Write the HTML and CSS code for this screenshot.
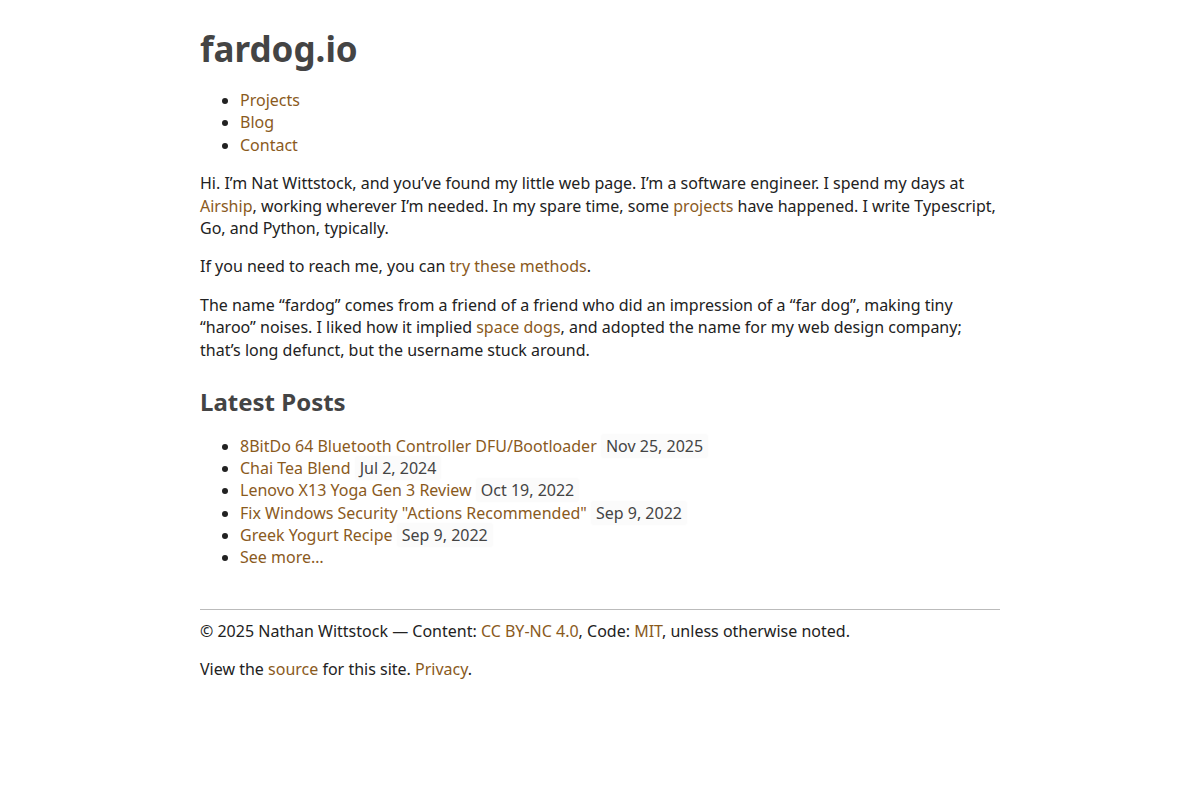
FILE: index.html
```html
<!DOCTYPE html>
<html>
<head>
    <meta charset="utf-8">
    <title>fardog.io</title>
    <link rel="stylesheet" href="styles.css">
</head>
<body>
    <div class="page">
        <header class="site-header">
            <h1 class="site-title">fardog.io</h1>
            <ul class="nav">
                <li><a href="#">Projects</a></li>
                <li><a href="#">Blog</a></li>
                <li><a href="#">Contact</a></li>
            </ul>
        </header>

        <main>
            <p>Hi. I’m Nat Wittstock, and you’ve found my little web page. I’m a software engineer. I spend my days at <a href="#">Airship</a>, working wherever I’m needed. In my spare time, some <a href="#">projects</a> have happened. I write Typescript, Go, and Python, typically.</p>
            <p>If you need to reach me, you can <a href="#">try these methods</a>.</p>
            <p>The name “fardog” comes from a friend of a friend who did an impression of a “far dog”, making tiny “haroo” noises. I liked how it implied <a href="#">space dogs</a>, and adopted the name for my web design company; that’s long defunct, but the username stuck around.</p>

            <h2 class="section-title">Latest Posts</h2>
            <ul class="posts">
                <li><a href="#">8BitDo 64 Bluetooth Controller DFU/Bootloader</a> <time class="date">Nov 25, 2025</time></li>
                <li><a href="#">Chai Tea Blend</a> <time class="date">Jul 2, 2024</time></li>
                <li><a href="#">Lenovo X13 Yoga Gen 3 Review</a> <time class="date">Oct 19, 2022</time></li>
                <li><a href="#">Fix Windows Security "Actions Recommended"</a> <time class="date">Sep 9, 2022</time></li>
                <li><a href="#">Greek Yogurt Recipe</a> <time class="date">Sep 9, 2022</time></li>
                <li><a href="#">See more…</a></li>
            </ul>
        </main>

        <footer class="site-footer">
            <p>© 2025 Nathan Wittstock — Content: <a href="#">CC BY-NC 4.0</a>, Code: <a href="#">MIT</a>, unless otherwise noted.</p>
            <p>View the <a href="#">source</a> for this site. <a href="#">Privacy</a>.</p>
        </footer>
    </div>
</body>
</html>
```

FILE: styles.css
```css
body {
    margin: 0;
    background: #fff;
    color: #222;
    font-family: "Noto Sans", sans-serif;
    font-size: 16px;
    line-height: 1.4;
}

a {
    color: #8a5a1d;
    text-decoration: none;
}

.page {
    width: 800px;
    margin: 0 auto;
    padding: 24px 0;
}

.site-title {
    margin: 0 0 16px 0;
    color: #444;
    font-size: 35px;
    line-height: 1.4;
    font-weight: 700;
}

.nav,
.posts {
    margin: 0;
    padding-left: 40px;
}

main p {
    margin: 16px 0;
}

.section-title {
    margin: 24px 0 16px 0;
    color: #444;
    font-size: 24px;
    line-height: 1.4;
}

.posts {
    margin-bottom: 40px;
}

/* faint pill behind post dates */
.date {
    color: #444;
    padding: 1px 5px;
    background: #fbfbfb;
    border-radius: 3px;
    box-shadow: 0 0 3px #fbfbfb;
}

.site-footer {
    border-top: 1px solid #bbb;
}

.site-footer p {
    margin: 16px 0;
}

.site-footer p:first-child {
    margin-top: 10px;
}
```
